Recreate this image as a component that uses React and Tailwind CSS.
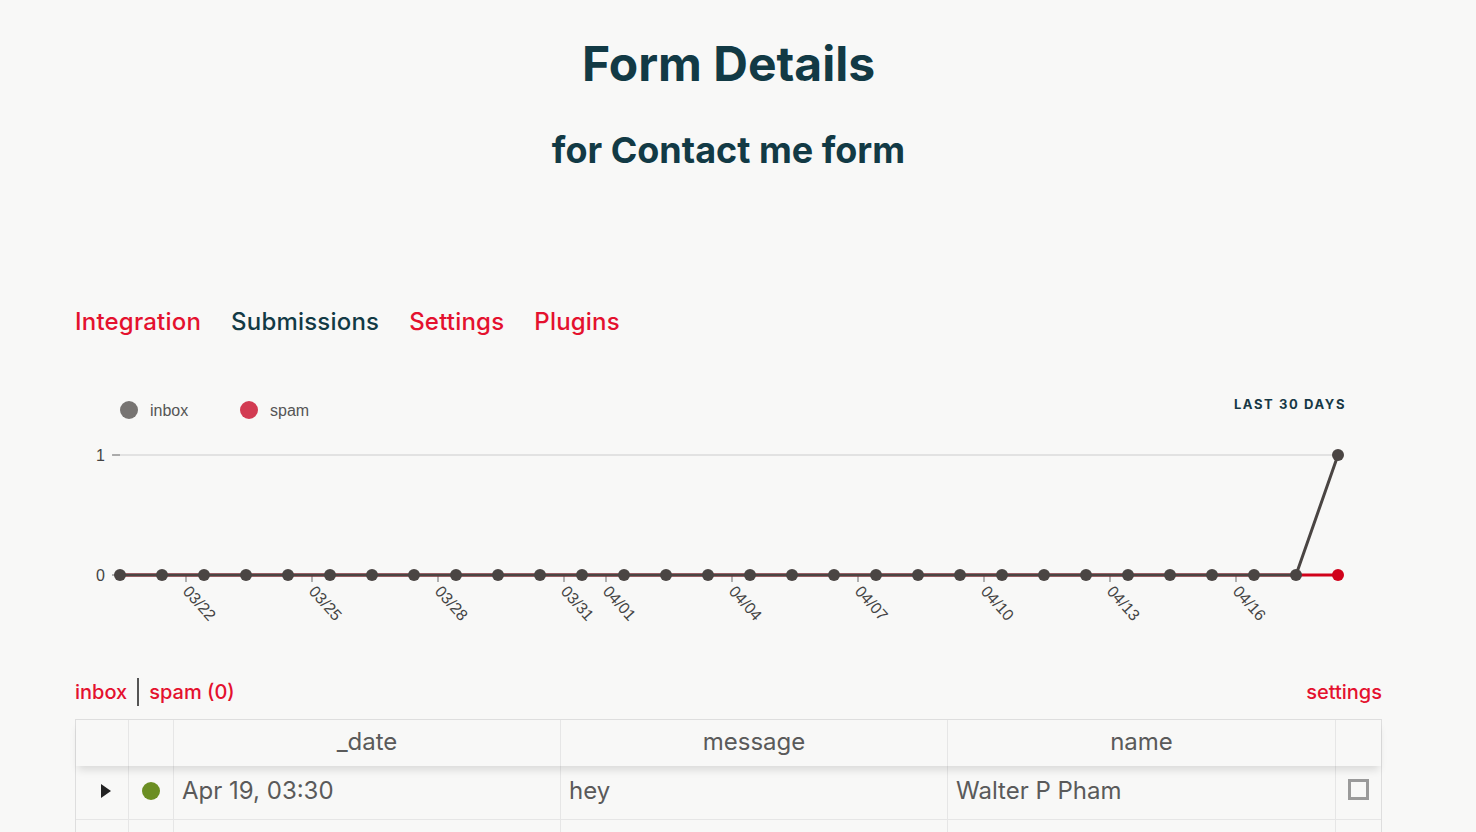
import React from 'react';

const ticks = [
  ['03/22', 186], ['03/25', 312], ['03/28', 438], ['03/31', 564], ['04/01', 606],
  ['04/04', 732], ['04/07', 858], ['04/10', 984], ['04/13', 1110], ['04/16', 1236],
];

const OX = 75;
const OY = 380;
const points = Array.from({ length: 30 }, (_, i) => 120 + i * 42 - OX);
const Y0 = 575 - OY;
const Y1 = 455 - OY;

const Chart = () => {
  const inboxPts = points.map((x, i) => `${x},${i === 29 ? Y1 : Y0}`).join(' ');
  return (
    <svg width="1307" height="260" className="block" style={{ fontFamily: '"Liberation Sans", Arial, sans-serif' }}>
      {/* legend */}
      <circle cx={129 - OX} cy={410 - OY} r="9" fill="#777472" />
      <text x={150 - OX} y={416 - OY} fontSize="16" fill="#555">inbox</text>
      <circle cx={249 - OX} cy={410 - OY} r="9" fill="#d23b52" />
      <text x={270 - OX} y={416 - OY} fontSize="16" fill="#555">spam</text>
      <text x={1346 - OX} y={409 - OY} fontSize="13" fontWeight="700" letterSpacing="1.6" fill="#173845" textAnchor="end" style={{ fontFamily: 'Inter, sans-serif' }}>LAST 30 DAYS</text>

      {/* grid + y axis */}
      <line x1={113 - OX} y1={Y1} x2={1338 - OX} y2={Y1} stroke="#e2e2e2" strokeWidth="2" />
      <line x1={112 - OX} y1={Y1} x2={120 - OX} y2={Y1} stroke="#999" strokeWidth="1.5" />
      <line x1={112 - OX} y1={Y0} x2={120 - OX} y2={Y0} stroke="#999" strokeWidth="1.5" />
      <text x={105 - OX} y={461 - OY} fontSize="16" fill="#444" textAnchor="end">1</text>
      <text x={105 - OX} y={581 - OY} fontSize="16" fill="#444" textAnchor="end">0</text>

      {/* x ticks */}
      {ticks.map(([label, x]) => (
        <g key={label}>
          <line x1={x - OX} y1={Y0} x2={x - OX} y2={Y0 + 7} stroke="#999" strokeWidth="1.5" />
          <text
            x={x - OX - 4}
            y={Y0 + 17}
            fontSize="16"
            fill="#444"
            transform={`rotate(48 ${x - OX - 4} ${Y0 + 17})`}
          >
            {label}
          </text>
        </g>
      ))}

      {/* spam line */}
      <line x1={points[0]} y1={Y0} x2={points[29]} y2={Y0} stroke="#d0021b" strokeWidth="3" />
      {/* inbox line */}
      <polyline points={inboxPts} fill="none" stroke="#4a4543" strokeWidth="3" />
      {points.slice(0, 29).map((x) => (
        <circle key={x} cx={x} cy={Y0} r="6" fill="#4a4543" />
      ))}
      <circle cx={points[29]} cy={Y0} r="6" fill="#d0021b" />
      <circle cx={points[29]} cy={Y1} r="6" fill="#4a4543" />
    </svg>
  );
};

export default function App() {
  return (
    <div className="min-h-[832px] bg-[#f8f8f7] overflow-hidden" style={{ fontFamily: 'Inter, "Noto Sans", sans-serif' }}>
      <div className="ml-[75px] w-[1307px]">
        <h1 className="pt-9 text-center text-[48px] leading-[56px] font-bold text-[#123a45]">Form Details</h1>
        <h2 className="mt-9 text-center text-[36px] leading-[44px] font-bold text-[#123a45]">for Contact me form</h2>

        <nav className="mt-[134px] flex gap-[30px] text-[24px] leading-[32px] font-medium tracking-[0.2px]">
          <span className="text-[#e4112e]">Integration</span>
          <span className="text-[#123a45]">Submissions</span>
          <span className="text-[#e4112e]">Settings</span>
          <span className="text-[#e4112e]">Plugins</span>
        </nav>

        <div className="mt-[42px]">
          <Chart />
        </div>

        <div className="mt-[38px] flex items-center justify-between text-[20px] leading-[28px] font-medium text-[#e4112e]">
          <div className="flex items-center">
            <span>inbox</span>
            <span className="mx-[10px] h-[28px] w-[2px] bg-[#555]" />
            <span>spam (0)</span>
          </div>
          <span>settings</span>
        </div>

        <div className="mt-[13px] border border-[#dedede] text-[#5a5a5a]">
          <div className="relative z-10 flex h-[46px] shadow-[0_6px_8px_-2px_rgba(0,0,0,0.12)] text-[24px] text-[#5a5a5a]">
            <div className="w-[53px] border-r border-[#e6e6e6]" />
            <div className="w-[45px] border-r border-[#e6e6e6]" />
            <div className="w-[387px] border-r border-[#e6e6e6] flex items-center justify-center pb-[2px]">_date</div>
            <div className="w-[387px] border-r border-[#e6e6e6] flex items-center justify-center pb-[2px]">message</div>
            <div className="w-[388px] border-r border-[#e6e6e6] flex items-center justify-center pb-[2px]">name</div>
            <div className="flex-1" />
          </div>
          <div className="flex h-[54px] border-b border-[#e6e6e6] text-[24px]">
            <div className="w-[53px] border-r border-[#e6e6e6] flex items-center justify-center pb-[4px]">
              <span className="ml-[7px] w-0 h-0 border-y-[7px] border-y-transparent border-l-[10px] border-l-[#222]" />
            </div>
            <div className="w-[45px] border-r border-[#e6e6e6] flex items-center justify-center pb-[4px]">
              <span className="w-[18px] h-[18px] rounded-full bg-[#6b8e23]" />
            </div>
            <div className="w-[387px] border-r border-[#e6e6e6] flex items-center pl-[8px] pb-[4px]">Apr 19, 03:30</div>
            <div className="w-[387px] border-r border-[#e6e6e6] flex items-center pl-[8px] pb-[4px]">hey</div>
            <div className="w-[388px] border-r border-[#e6e6e6] flex items-center pl-[8px] pb-[4px]">Walter P Pham</div>
            <div className="flex-1 flex items-center justify-center pb-[4px]">
              <span className="-mt-[2px] w-[21px] h-[21px] border-[3px] border-[#9a9a9a]" />
            </div>
          </div>
          <div className="flex h-[40px]">
            <div className="w-[53px] border-r border-[#e6e6e6]" />
            <div className="w-[45px] border-r border-[#e6e6e6]" />
            <div className="w-[387px] border-r border-[#e6e6e6]" />
            <div className="w-[387px] border-r border-[#e6e6e6]" />
            <div className="w-[388px] border-r border-[#e6e6e6]" />
            <div className="flex-1" />
          </div>
        </div>
      </div>
    </div>
  );
}
